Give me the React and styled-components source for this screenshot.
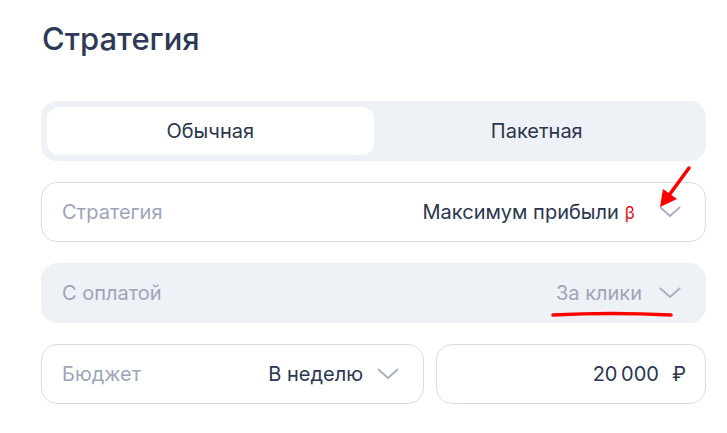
import React, { useState } from 'react'
import styled, { createGlobalStyle } from 'styled-components'

const GlobalStyle = createGlobalStyle`
  body {
    margin: 0;
    background: #fff;
    font-family: Inter, "Noto Sans", sans-serif;
    color: #2b3650;
  }
`

const Page = styled.div`
  position: relative;
  width: 727px;
  height: 433px;
  padding: 20px 21px 0 41px;
  box-sizing: border-box;
  display: flex;
  flex-direction: column;
`

const Title = styled.h2`
  margin: 0 0 43px 1px;
  font-size: 31px;
  line-height: 38px;
  font-weight: 500;
  color: #2e3a55;
`

const Tabs = styled.div`
  display: grid;
  grid-template-columns: 1fr 1fr;
  padding: 6px;
  height: 60px;
  box-sizing: border-box;
  background: #eef1f6;
  border-radius: 16px;
  margin-bottom: 21px;
`

const Tab = styled.button`
  border: none;
  border-radius: 12px;
  background: ${(p) => (p.active ? '#fff' : 'transparent')};
  font-family: inherit;
  font-size: 20px;
  color: #2b3650;
  cursor: pointer;
`

const Field = styled.div`
  display: flex;
  align-items: center;
  height: 60px;
  box-sizing: border-box;
  padding: 0 24px 0 20px;
  border-radius: 16px;
  border: 1px solid ${(p) => (p.filled ? '#eef1f6' : '#d9dde8')};
  background: ${(p) => (p.filled ? '#eef1f6' : '#fff')};
  margin-bottom: ${(p) => (p.last ? 0 : 21)}px;
  flex: ${(p) => p.grow || 'none'};
  font-size: 20px;
`

const Label = styled.span`
  color: #9da5b8;
  flex: 1;
`

const Value = styled.span`
  color: ${(p) => (p.muted ? '#9da5b8' : '#2b3650')};
  margin-right: ${(p) => p.gap || 16}px;
`

const Beta = styled.span`
  color: #e01010;
  font-size: 17px;
  margin-left: 6px;
`

const Row = styled.div`
  display: flex;
  gap: 12px;
`

const Amount = styled.span`
  margin-left: auto;
  margin-right: -5px;
  color: #2b3650;
`

const Ruble = styled.span`
  margin-left: 13px;
`

const Overlay = styled.svg`
  position: absolute;
  left: 0;
  top: 0;
  pointer-events: none;
`

const Chevron = () => (
  <svg width="22" height="12" viewBox="0 0 22 12" fill="none">
    <path d="M1.5 1.5L11 10L20.5 1.5" stroke="#a9b1c2" strokeWidth="2" strokeLinecap="round" strokeLinejoin="round" />
  </svg>
)

const App = () => {
  const [tab, setTab] = useState('regular')

  return (
    <Page>
      <GlobalStyle />
      <Title>Стратегия</Title>
      <Tabs>
        <Tab active={tab === 'regular'} onClick={() => setTab('regular')}>Обычная</Tab>
        <Tab active={tab === 'package'} onClick={() => setTab('package')}>Пакетная</Tab>
      </Tabs>
      <Field>
        <Label>Стратегия</Label>
        <Value gap={24}>
          Максимум прибыли<Beta>β</Beta>
        </Value>
        <Chevron />
      </Field>
      <Field filled>
        <Label>С оплатой</Label>
        <Value muted gap={17}>За клики</Value>
        <Chevron />
      </Field>
      <Row>
        <Field grow="0 0 383px" last>
          <Label>Бюджет</Label>
          <Value gap={14}>В неделю</Value>
          <Chevron />
        </Field>
        <Field grow="1" last>
          <Amount>
            20{'\u2009'}000<Ruble>₽</Ruble>
          </Amount>
        </Field>
      </Row>
      <Overlay width="727" height="433">
        <line x1="689" y1="168" x2="667" y2="198" stroke="#f00" strokeWidth="3.5" strokeLinecap="round" />
        <polygon points="660,207 663,189 677,199" fill="#f00" />
        <path d="M553 315 Q610 312 671 315" stroke="#f00" strokeWidth="3.5" strokeLinecap="round" fill="none" />
      </Overlay>
    </Page>
  )
}

export default App
